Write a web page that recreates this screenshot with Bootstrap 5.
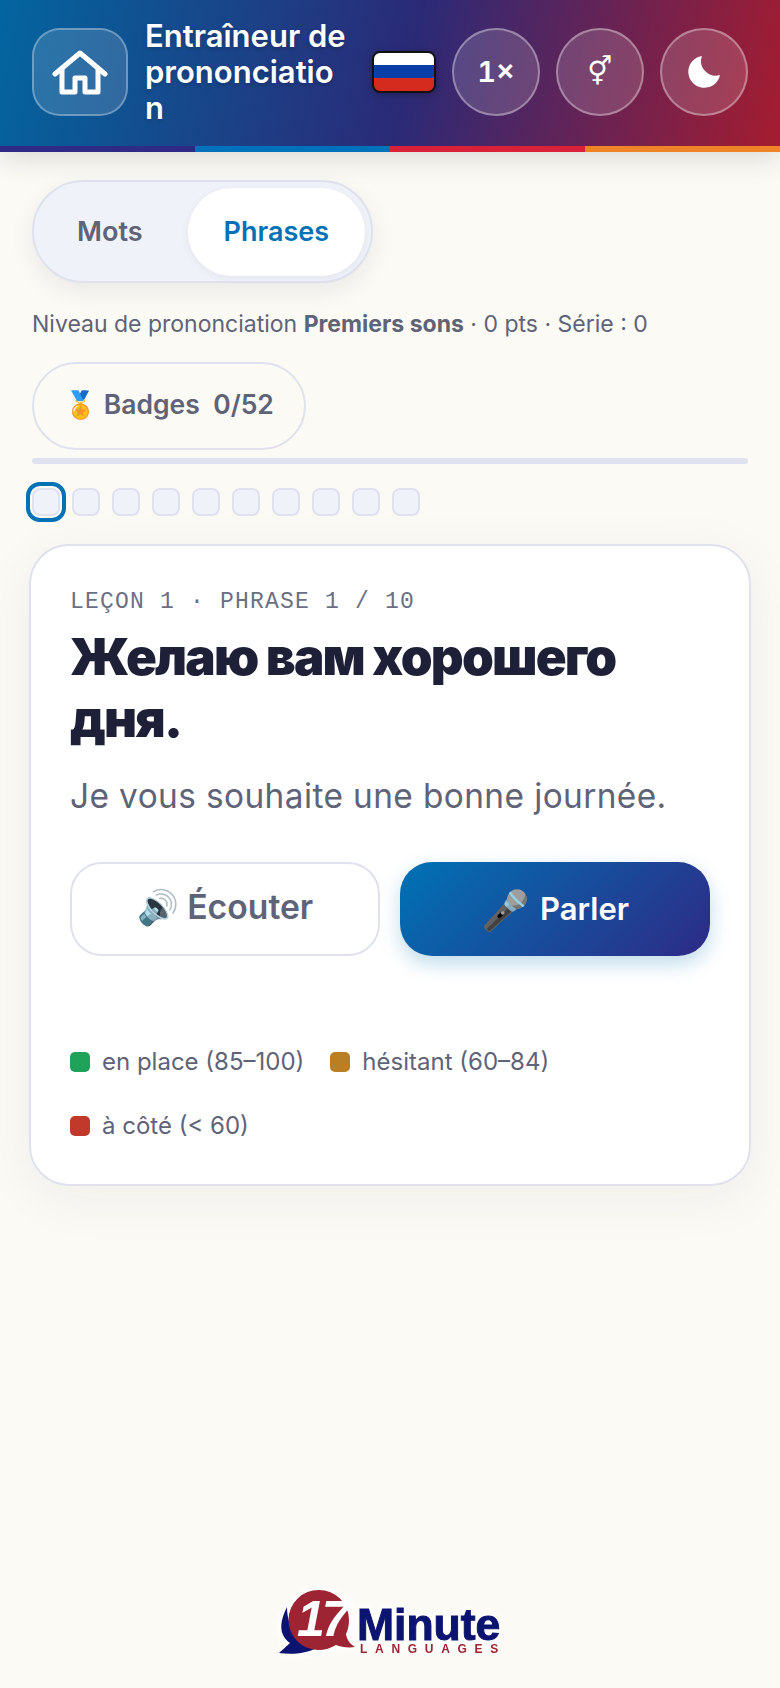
<!DOCTYPE html>
<html lang="fr">
<head>
<meta charset="utf-8">
<title>Entraîneur de prononciation</title>
<meta name="viewport" content="width=device-width, initial-scale=1">
<link href="https://cdn.jsdelivr.net/npm/bootstrap@5.3.0/dist/css/bootstrap.min.css" rel="stylesheet">
<style>
body{background:#fbfaf5;font-family:Inter,"Noto Sans",sans-serif;color:#5f6377}
.app-shell{width:780px;min-height:1688px}
.hero{height:152px;background:linear-gradient(102deg,#03659f 0%,#2b2a77 52%,#a51c30 100%);box-shadow:0 8px 24px rgba(30,30,40,.13);padding:28px 32px 36px;position:relative;gap:16px}
.hero::after{content:"";position:absolute;left:0;right:0;bottom:0;height:6px;background:linear-gradient(90deg,#2e2a85 25%,#0072bc 25% 50%,#d9213a 50% 75%,#ee8427 75%)}
.home-tile{flex:none;width:96px;height:88px;border-radius:28px;background:rgba(255,255,255,.14);border:2px solid rgba(255,255,255,.3);padding:0}
.hero-title{flex:1;min-width:0;margin:0 6px 0 1px;color:#fff;font-size:31px;font-weight:600;line-height:36px;overflow-wrap:anywhere;text-shadow:0 2px 4px rgba(0,0,0,.2)}
.flag-box{flex:none;width:64px;height:42px;border-radius:8px;border:2px solid #111;overflow:hidden;background:linear-gradient(#fff 32%,#0a3fa8 32% 67%,#d52b1e 67%);box-shadow:0 2px 8px rgba(0,0,0,.25);padding:0}
.round-tool{flex:none;width:88px;height:88px;border-radius:50%;background:rgba(255,255,255,.15);border:2px solid rgba(255,255,255,.35);color:#fff;padding:0;font-weight:600;font-size:29px;font-variant-numeric:tabular-nums}
.round-tool:hover{color:#fff}
.glyph-mf{font-family:"DejaVu Sans",sans-serif;font-weight:400;font-size:28px;line-height:1}
.content-pad{padding:0 32px}
.mode-tabs{width:341px;height:103px;padding:6px 6px 6px 2px;gap:4px;border-radius:52px;background:#eff2f9;border:2px solid #dfe2ee;box-shadow:0 8px 24px rgba(30,30,50,.08);margin-top:28px}
.mode-tab{border-radius:44px;height:88px;font-size:27px;font-weight:600;color:#5f6377;border:0;padding:0}
.mode-tab.first-tab{width:148px}
.mode-tab.active-tab{width:178px;background:#fff;color:#0072b5;box-shadow:0 2px 8px rgba(30,30,50,.06)}
.status-line{font-size:23px;line-height:36px;margin:23px 0 0}
.status-line b{font-weight:700}
.badge-pill{width:274px;height:88px;border:2px solid #dfe2ee;border-radius:44px;background:transparent;color:#5f6377;font-size:26.500px;font-weight:600;margin-top:20px;padding:0 0 3px}
.track-line{height:6px;border-radius:3px;background:#dfe2ee;margin-top:8px}
.dot-row{gap:12px;margin-top:24px}
.step-dot{width:28px;height:28px;border-radius:8px;background:#eff2f9;border:2px solid #dfe2ee}
.step-dot.now{outline:4px solid #0072b5;outline-offset:2px}
.main-card{margin:28px 29px 0;width:722px;border:2px solid #dfe2ee;border-radius:40px;box-shadow:0 12px 56px rgba(30,30,50,.06);padding:42px 39px 26px}
.eyebrow{font-family:"Liberation Mono",monospace;font-size:23px;letter-spacing:1.2px;line-height:28px;color:#6b6f85}
.phrase{font-size:51px;font-weight:900;line-height:62px;color:#1e2038;margin:10px 0 0;letter-spacing:-1.800px}
.gloss{font-size:33.400px;line-height:48px;margin:22px 0 0;letter-spacing:.4px}
.act-row{gap:20px;margin-top:42px}
.act-btn{width:310px;height:94px;border-radius:32px;font-weight:600;padding:0}
.act-btn.listen{font-size:33.700px;background:#fff;border:2px solid #dfe2ee;color:#5f6377;padding-bottom:3px}
.act-btn.speak{font-size:31px;background:linear-gradient(135deg,#0072b5,#2e2a85);border:0;color:#fff;box-shadow:0 8px 20px rgba(0,114,181,.25);gap:10px}
.act-btn.speak:hover{color:#fff}
.mic-emoji{font-size:39px;line-height:1}
.legend{gap:0 26px;margin-top:74px;font-size:24px}
.legend-item{height:64px;gap:12px}
.swatch{width:20px;height:20px;border-radius:5px}
.logo-foot{padding:0 0 13px 10px}
.logo-art{filter:drop-shadow(0 0 5px #fff) drop-shadow(0 0 3px #fff)}
.logo-17{font-family:"Liberation Sans",sans-serif;font-weight:700;font-style:italic;font-size:50px;letter-spacing:-3px;fill:#fff}
.logo-min{font-family:"Liberation Sans",sans-serif;font-weight:700;font-size:44.500px;fill:#0b1470;stroke:#0b1470;stroke-width:1px}
.logo-lang{font-family:"Liberation Sans",sans-serif;font-weight:700;font-size:12px;letter-spacing:7.700px;fill:#9c2433}
</style>
</head>
<body class="m-0">
<div class="app-shell d-flex flex-column">
  <header class="hero d-flex align-items-center">
    <button class="btn home-tile d-flex align-items-center justify-content-center" aria-label="Accueil">
      <svg width="56" height="48" viewBox="0 0 56 48" fill="none" stroke="#fff" stroke-width="5" stroke-linejoin="round" stroke-linecap="round"><path d="M3 26 28 5l25 21"/><path d="M10 21v23h13V30h10v14h13V21"/></svg>
    </button>
    <h1 class="hero-title">Entraîneur de prononciation</h1>
    <button class="btn flag-box" aria-label="Russe"></button>
    <button class="btn round-tool">1×</button>
    <button class="btn round-tool glyph-mf">⚥</button>
    <button class="btn round-tool d-flex align-items-center justify-content-center" aria-label="Thème">
      <svg width="32" height="32" viewBox="0 0 32 32"><path fill="#fff" d="M14 0a16 16 0 1 0 18 19 14.600 14.600 0 0 1-18-19z"/></svg>
    </button>
  </header>
  <main>
    <div class="content-pad">
      <div class="mode-tabs d-flex">
        <button class="btn mode-tab first-tab">Mots</button>
        <button class="btn mode-tab active-tab">Phrases</button>
      </div>
      <p class="status-line">Niveau de prononciation <b>Premiers sons</b> · 0 pts · Série : 0</p>
      <button class="btn badge-pill">🏅 Badges&nbsp; 0/52</button>
      <div class="track-line"></div>
      <div class="dot-row d-flex">
        <span class="step-dot now"></span><span class="step-dot"></span><span class="step-dot"></span><span class="step-dot"></span><span class="step-dot"></span><span class="step-dot"></span><span class="step-dot"></span><span class="step-dot"></span><span class="step-dot"></span><span class="step-dot"></span>
      </div>
    </div>
    <section class="card main-card">
      <div class="eyebrow">LEÇON 1 · PHRASE 1 / 10</div>
      <h2 class="phrase">Желаю вам хорошего дня.</h2>
      <p class="gloss">Je vous souhaite une bonne journée.</p>
      <div class="act-row d-flex">
        <button class="btn act-btn listen">🔊 Écouter</button>
        <button class="btn act-btn speak d-flex align-items-center justify-content-center"><span class="mic-emoji">🎤</span> Parler</button>
      </div>
      <div class="legend d-flex flex-wrap">
        <div class="legend-item d-flex align-items-center"><span class="swatch" style="background:#1fa35a"></span>en place (85–100)</div>
        <div class="legend-item d-flex align-items-center"><span class="swatch" style="background:#b97f22"></span>hésitant (60–84)</div>
        <div class="legend-item d-flex align-items-center"><span class="swatch" style="background:#c0392b"></span>à côté (&lt; 60)</div>
      </div>
    </section>
  </main>
  <footer class="logo-foot mt-auto d-flex justify-content-center">
    <svg class="logo-art" width="240" height="90" viewBox="0 0 240 90" aria-label="17 Minute Languages">
      <path fill="#0b1470" d="M12 22C4 38 4 50 15 58L4 68c14 2 28 0 38-5-14-3-30-16-30-41z"/>
      <path fill="#9c2433" d="M44 5a30 30 0 0 0-1 60c7 0 13-2 18-5 5 2 12 3 19 2-5-3-8-7-9-13 2-4 3-9 3-14A30 30 0 0 0 44 5z"/>
      <text class="logo-17" x="22" y="51">17</text>
      <text class="logo-min" x="82" y="55">Minute</text>
      <text class="logo-lang" x="85" y="68">LANGUAGES</text>
    </svg>
  </footer>
</div>
</body>
</html>
